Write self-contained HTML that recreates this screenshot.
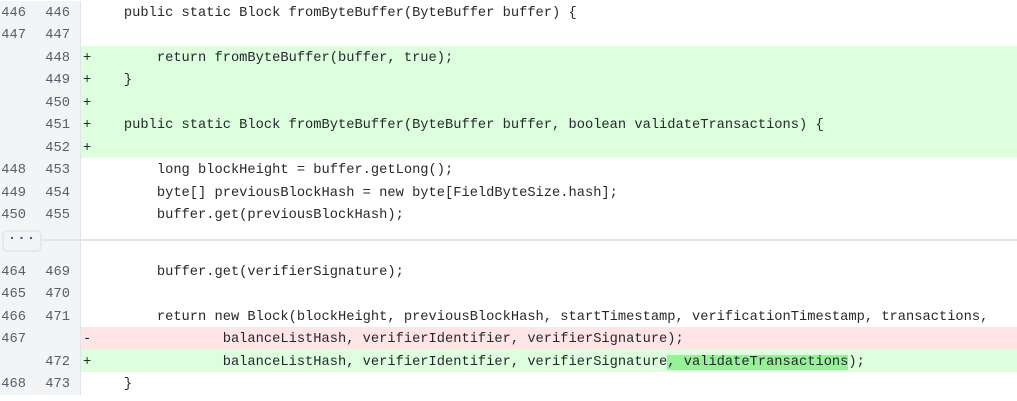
<!DOCTYPE html>
<html><head><style>
body{margin:0;width:1017px;height:401px;overflow:hidden;background:#fff;font-family:"Liberation Mono",monospace;font-size:13.72px;color:#24292e}
.r{position:relative;height:22.5px;line-height:22.5px;white-space:pre}
.g{position:absolute;left:0;top:0;width:80px;height:100%;background:#f3f4f6;border-right:1px solid #e1e4e8;color:#57606a}
.n1{position:absolute;top:2px;left:0;width:26px;text-align:right}
.n2{position:absolute;top:2px;left:40px;width:30px;text-align:right}
.m{position:absolute;top:2px;left:83px}
.c{position:absolute;top:2px;left:91px}
.add{background:#ddffdd}
.del{background:#ffe5e5}
.hl{background:#97f295}
.exp{position:relative;height:34px}
.exp .g{height:34px}
.box{position:absolute;left:2px;top:4px;width:40px;height:22px;border:2px solid #e6e8eb;border-radius:5px;background:#f3f4f6;box-sizing:border-box;text-align:center;line-height:14px;font-size:14px;color:#3a5a8a;font-weight:bold;letter-spacing:1px}
.ln{position:absolute;left:42px;right:0;top:13px;height:2px;background:#e1e4e8}
</style></head><body>
<div style="height:0.5px"></div>
<div class="r"><div class="g"><span class="n1">446</span><span class="n2">446</span></div><span class="c">    public static Block fromByteBuffer(ByteBuffer buffer) {</span></div>
<div class="r"><div class="g"><span class="n1">447</span><span class="n2">447</span></div></div>
<div class="r add"><div class="g"><span class="n2">448</span></div><span class="m">+</span><span class="c">        return fromByteBuffer(buffer, true);</span></div>
<div class="r add"><div class="g"><span class="n2">449</span></div><span class="m">+</span><span class="c">    }</span></div>
<div class="r add"><div class="g"><span class="n2">450</span></div><span class="m">+</span></div>
<div class="r add"><div class="g"><span class="n2">451</span></div><span class="m">+</span><span class="c">    public static Block fromByteBuffer(ByteBuffer buffer, boolean validateTransactions) {</span></div>
<div class="r add"><div class="g"><span class="n2">452</span></div><span class="m">+</span></div>
<div class="r"><div class="g"><span class="n1">448</span><span class="n2">453</span></div><span class="c">        long blockHeight = buffer.getLong();</span></div>
<div class="r"><div class="g"><span class="n1">449</span><span class="n2">454</span></div><span class="c">        byte[] previousBlockHash = new byte[FieldByteSize.hash];</span></div>
<div class="r"><div class="g"><span class="n1">450</span><span class="n2">455</span></div><span class="c">        buffer.get(previousBlockHash);</span></div>
<div class="exp"><div class="g"></div><div class="ln"></div><div class="box">···</div></div>
<div class="r"><div class="g"><span class="n1">464</span><span class="n2">469</span></div><span class="c">        buffer.get(verifierSignature);</span></div>
<div class="r"><div class="g"><span class="n1">465</span><span class="n2">470</span></div></div>
<div class="r"><div class="g"><span class="n1">466</span><span class="n2">471</span></div><span class="c">        return new Block(blockHeight, previousBlockHash, startTimestamp, verificationTimestamp, transactions,</span></div>
<div class="r del"><div class="g"><span class="n1">467</span></div><span class="m">-</span><span class="c">                balanceListHash, verifierIdentifier, verifierSignature);</span></div>
<div class="r add"><div class="g"><span class="n2">472</span></div><span class="m">+</span><span class="c">                balanceListHash, verifierIdentifier, verifierSignature<span class="hl">, validateTransactions</span>);</span></div>
<div class="r"><div class="g"><span class="n1">468</span><span class="n2">473</span></div><span class="c">    }</span></div>
</body></html>
